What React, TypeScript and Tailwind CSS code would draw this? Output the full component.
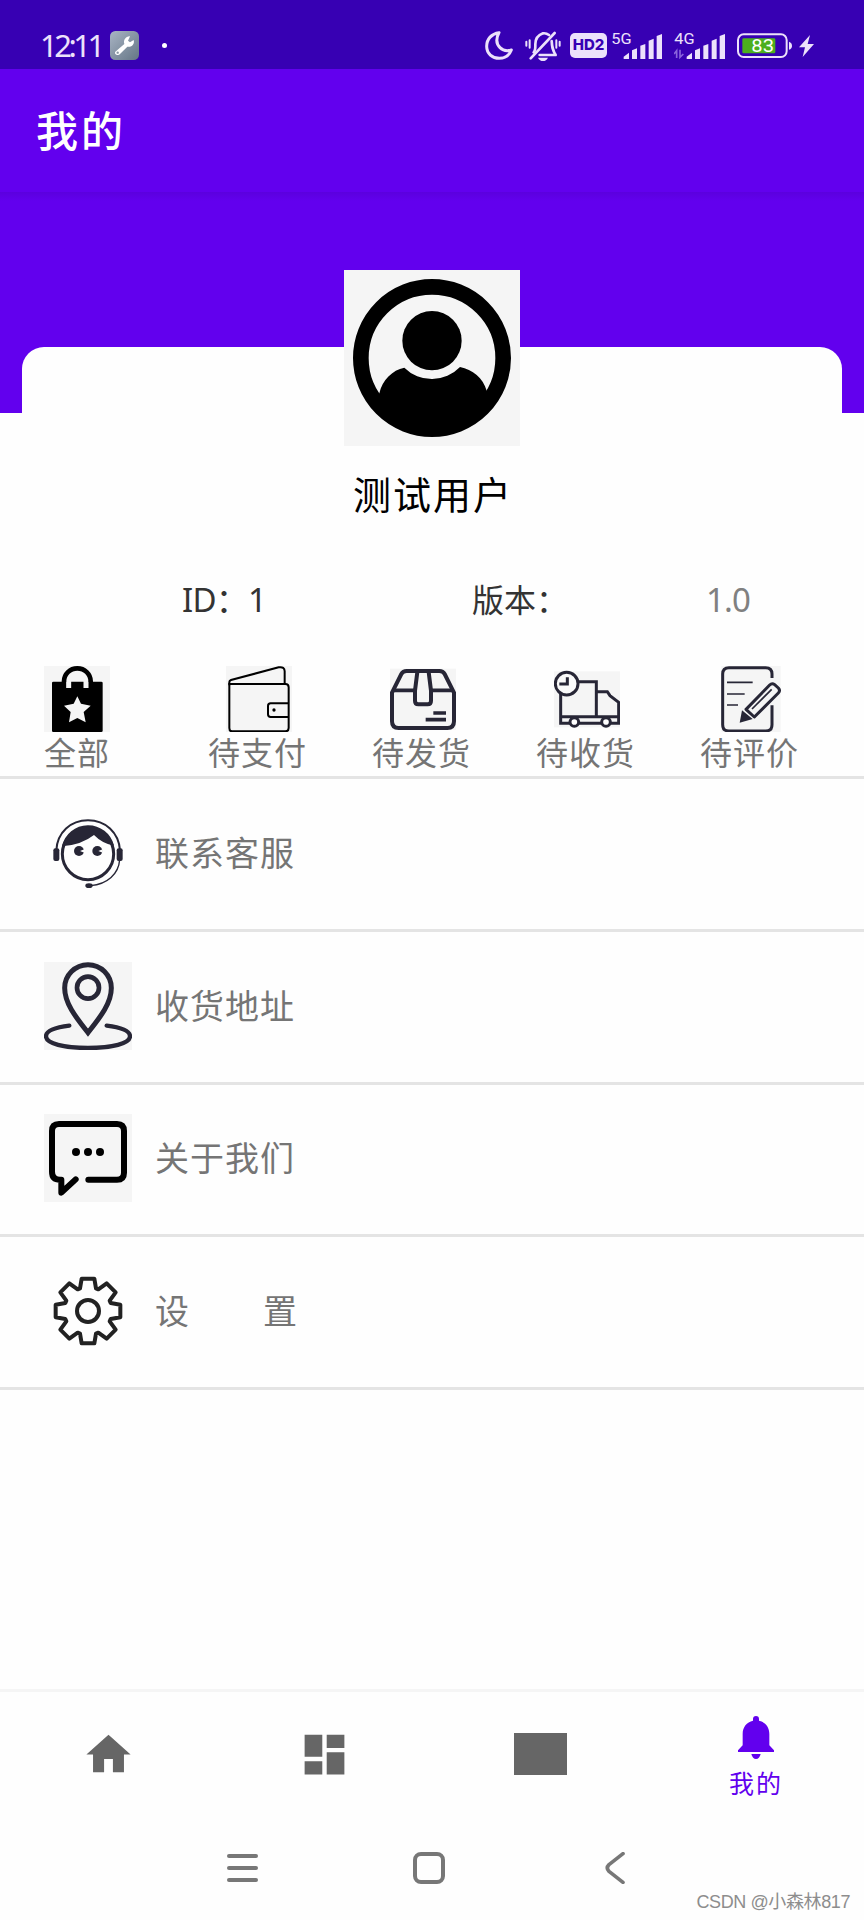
import React, { useState } from 'react';

const INK = '#272636';
const STATUS = '#ece1fb';
const TILE = '#f5f5f5';

const MoonIcon = () => (
  <svg className="w-7 h-[29px]" viewBox="0 0 84 87" fill="none" stroke={STATUS} strokeWidth="9" strokeLinejoin="round">
    <path d="M42 5 C20 8 5 24 5 46 C5 68 22 82 43 82 C60 82 73 73 79 57 C66 61 53 58 45 50 C34 39 33 22 42 5 Z" />
  </svg>
);

const MutedBellIcon = () => (
  <svg className="w-9 h-[30px]" viewBox="0 0 108 90" fill="none" stroke={STATUS} strokeWidth="8" strokeLinecap="round">
    <path d="M26 64 C32 58 31 50 31 40 C31 23 40 12 54 7 C60 6 68 9 72 12" />
    <path d="M80 30 C81 48 82 56 92 72 H44" strokeLinejoin="round" />
    <path d="M17 82 L89 6" />
    <path d="M39 80 H69 Q64 90 54 90 Q44 90 39 80 Z" fill={STATUS} stroke="none" />
    <path d="M4 32 V44 M14 28 V50 M94 28 V50 M104 32 V44" strokeWidth="6" />
  </svg>
);

const SignalIcon = ({ label, arrows }: { label: string; arrows?: boolean }) => (
  <svg className="w-[52px] h-9" viewBox="0 -12 156 108" fill={STATUS}>
    <text x="1" y="37" fontSize="46" fontFamily="Roboto, sans-serif" textLength="61" lengthAdjust="spacingAndGlyphs">
      {label}
    </text>
    <path d="M38 81 V74 L54 62 V81 Z" />
    <path d="M63 81 V55 L78 49 V81 Z" />
    <path d="M88 81 V41 L103 36 V81 Z" />
    <path d="M113 81 V26 L128 20 V81 Z" />
    <path d="M137 81 V12 L153 6 V81 Z" />
    {arrows && (
      <path d="M0 66 L8 56 V78 M18 53 V76 L28 66" fill="none" stroke="#8a63dc" strokeWidth="5" />
    )}
  </svg>
);

const BatteryIcon = () => (
  <svg className="w-[56px] h-[26px]" viewBox="0 0 168 78">
    <rect x="3" y="4" width="146" height="68" rx="17" fill="none" stroke={STATUS} strokeWidth="6" />
    <rect x="16" y="16" width="99" height="45" rx="4" fill="#4caf1e" />
    <path d="M156 26 Q165 29 165 38 Q165 47 156 50 Z" fill={STATUS} />
    <text x="43" y="58" fontSize="54" fontFamily="Roboto, sans-serif" fill="#fff" textLength="68" lengthAdjust="spacingAndGlyphs">
      83
    </text>
  </svg>
);

const BoltIcon = () => (
  <svg className="w-[15px] h-[22px]" viewBox="0 0 45 66" fill={STATUS}>
    <path d="M33 0 L0 37 H18 L11 66 L45 27 H26 Z" />
  </svg>
);

const WrenchIcon = () => (
  <svg className="w-[29px] h-[29px]" viewBox="0 0 87 87">
    <defs>
      <linearGradient id="tool" x1="0" y1="0" x2="1" y2="1">
        <stop offset="0" stopColor="#a9b4c4" />
        <stop offset="1" stopColor="#647585" />
      </linearGradient>
    </defs>
    <rect width="87" height="87" rx="16" fill="url(#tool)" />
    <path d="M16 62 L43 39 C39 27 48 15 60 16 L54 29 L60 34 L71 27 C75 40 64 50 52 47 L30 69 C25 75 11 70 16 62 Z" fill="#fff" />
    <circle cx="23" cy="65" r="3.5" fill="#8593a1" />
  </svg>
);

const Avatar = () => (
  <svg className="w-44 h-44" viewBox="0 0 528 528">
    <rect width="528" height="528" fill={TILE} />
    <circle cx="264" cy="264" r="213.5" fill="none" stroke="#000" strokeWidth="47" />
    <circle cx="264" cy="212" r="89" />
    <path d="M106 370 C115 330 145 300 181 293 A117 117 0 0 0 348 291 C385 298 418 325 428 362 L440 400 A230 230 0 0 1 90 400 Z" />
  </svg>
);

const BagIcon = () => (
  <svg className="w-[66px] h-[66px]" viewBox="0 0 198 198">
    <rect width="198" height="198" fill={TILE} />
    <rect x="24" y="47" width="152" height="151" rx="4" />
    <path d="M74 66 V47 A26 26 0 0 1 126 47 V66" fill="none" stroke={TILE} strokeWidth="15" />
    <path d="M60 48 V46 A40 39 0 0 1 140 46 V48" fill="none" stroke="#000" strokeWidth="14" />
    <path d="M100 91 L111 113 L140 119 L119 138 L125 169 L100 156 L75 169 L80 138 L60 119 L89 113 Z" fill={TILE} />
  </svg>
);

const WalletIcon = () => (
  <svg className="w-[66px] h-[66px]" viewBox="0 0 198 198" fill="none" stroke="#000" strokeWidth="6">
    <rect width="198" height="198" fill={TILE} stroke="none" />
    <path d="M10 58 V48 Q10 44 15 42 L158 4 Q176 1 176 16 V54" />
    <path d="M10 54 H178 Q188 54 188 64 V186 Q188 196 178 196 H18 Q10 196 10 186 Z" />
    <path d="M188 112 H134 Q126 112 126 120 V145 Q126 153 134 153 H188" />
    <circle cx="144" cy="132" r="5" fill="#000" stroke="none" />
  </svg>
);

const PackageIcon = () => (
  <svg className="w-[66px] h-[66px]" viewBox="0 0 198 198" fill="none" stroke={INK} strokeWidth="12">
    <rect y="8" width="198" height="184" fill={TILE} stroke="none" />
    <path d="M6 80 L34 24 Q39 15 50 15 H148 Q159 15 164 24 L192 80 V166 Q192 186 172 186 H26 Q6 186 6 166 Z" />
    <path d="M10 73 H76 M122 73 H188" strokeWidth="11" />
    <path d="M82 18 L75 74 V104 Q75 115 85 115 H113 Q123 115 123 104 V74 L116 18" />
    <path d="M130 141 H168 M107 161 H168" strokeWidth="11" />
  </svg>
);

const TruckIcon = () => (
  <svg className="w-[66px] h-[66px]" viewBox="0 0 198 198" fill="none" stroke={INK} strokeWidth="9">
    <rect y="16" width="198" height="168" fill={TILE} stroke="none" />
    <path d="M72 47 H127 V150 M20 84 V172 H194 V109 L168 89 L160 77 H128 M20 152 H194" />
    <circle cx="38" cy="53" r="34" fill="#fafafa" />
    <path d="M40 34 V54 H16" />
    <circle cx="61" cy="168" r="13" fill="#fff" />
    <circle cx="156" cy="168" r="13" fill="#fff" />
  </svg>
);

const ReviewIcon = () => (
  <svg className="w-[66px] h-[66px]" viewBox="0 0 198 198" fill="none" stroke={INK} strokeWidth="9">
    <rect x="10" width="178" height="198" fill={TILE} stroke="none" />
    <path d="M162 36 V24 Q162 5 143 5 H33 Q14 5 14 24 V176 Q14 195 33 195 H143 Q162 195 162 176 V118" />
    <path d="M27 49 H104 M27 84 H80 M27 117 H60" strokeWidth="5" />
    <path d="M84 130 L155 57 Q162 50 170 56 L181 66 Q188 74 181 81 L109 153 Z" strokeLinejoin="round" />
    <path d="M102 129 L161 70" strokeWidth="5" />
    <path d="M65 170 L72 133 L104 159 Z" fill={INK} stroke="none" />
  </svg>
);

const SupportIcon = () => (
  <svg className="w-[88px] h-[88px]" viewBox="0 0 264 264" fill="none" stroke={INK}>
    <path d="M37 124 C40 70 80 34 132 34 C184 34 224 70 228 124" strokeWidth="6" />
    <circle cx="132" cy="135" r="77" strokeWidth="9" />
    <path d="M54 112 Q112 108 150 78 Q175 104 210 110 A80 80 0 0 0 54 112 Z" fill={INK} stroke="none" />
    <rect x="28" y="118" width="18" height="38" rx="6" fill={INK} stroke="none" />
    <rect x="218" y="118" width="18" height="38" rx="6" fill={INK} stroke="none" />
    <circle cx="105" cy="126" r="15" fill={INK} stroke="none" />
    <circle cx="160" cy="126" r="15" fill={INK} stroke="none" />
    <path d="M108 126 L121 121 V131 Z M163 126 L176 121 V131 Z" fill="#fff" stroke="none" />
    <path d="M227 152 C224 195 190 226 140 230" strokeWidth="4" />
    <ellipse cx="135" cy="230" rx="11" ry="7" fill={INK} stroke="none" />
  </svg>
);

const AddressIcon = () => (
  <svg className="w-[88px] h-[88px]" viewBox="0 0 264 264" fill="none" stroke={INK} strokeWidth="15">
    <rect width="264" height="264" fill={TILE} stroke="none" />
    <path d="M132 212 C95 165 62 124 62 78 A70 70 0 0 1 202 78 C202 124 169 165 132 212 Z" />
    <circle cx="132" cy="77" r="33" strokeWidth="14" />
    <path d="M76 191 C35 196 6 206 6 223 C6 245 60 258 132 258 S258 245 258 223 C258 206 229 196 188 191" strokeWidth="13" strokeLinecap="round" />
  </svg>
);

const ChatIcon = () => (
  <svg className="w-[88px] h-[88px]" viewBox="0 0 264 264">
    <rect width="264" height="264" fill={TILE} />
    <path
      d="M133 197 H219 Q240 197 240 176 V51 Q240 30 219 30 H45 Q24 30 24 51 V173 Q24 197 48 197 H52 V236 L95 196"
      fill="none"
      stroke="#000"
      strokeWidth="18"
      strokeLinecap="round"
      strokeLinejoin="round"
    />
    <circle cx="96" cy="114" r="12" />
    <circle cx="132" cy="114" r="12" />
    <circle cx="168" cy="114" r="12" />
  </svg>
);

const GearIcon = () => (
  <svg className="w-[88px] h-[88px]" viewBox="-132 -132 264 264" fill="none" stroke="#222" strokeWidth="12" strokeLinejoin="round">
    <path d="M-19 -97 H19 L24 -68 L31 -65 L56 -83 L83 -56 L65 -31 L68 -24 L97 -19 V19 L68 24 L65 31 L83 56 L56 83 L31 65 L24 68 L19 97 H-19 L-24 68 L-31 65 L-56 83 L-83 56 L-65 31 L-68 24 L-97 19 V-19 L-68 -24 L-65 -31 L-83 -56 L-56 -83 L-31 -65 L-24 -68 Z" />
    <circle r="33" />
  </svg>
);

const orders = [
  { label: '待支付', icon: <WalletIcon /> },
  { label: '待发货', icon: <PackageIcon /> },
  { label: '待收货', icon: <TruckIcon /> },
  { label: '待评价', icon: <ReviewIcon /> }
];

const menu = [
  { label: '联系客服', icon: <SupportIcon /> },
  { label: '收货地址', icon: <AddressIcon /> },
  { label: '关于我们', icon: <ChatIcon /> },
  { label: '设置', icon: <GearIcon />, spread: true }
];

const tabs = [
  {
    key: 'home',
    icon: (
      <svg className="w-[53px] h-[53px]" viewBox="0 0 24 24" fill="currentColor">
        <path d="M10 20v-6h4v6h5v-8h3L12 3 2 12h3v8z" />
      </svg>
    )
  },
  {
    key: 'dashboard',
    icon: (
      <svg className="w-[53px] h-[53px]" viewBox="0 0 24 24" fill="currentColor">
        <path d="M3 13h8V3H3v10zm0 8h8v-6H3v6zm10 0h8V11h-8v10zm0-18v6h8V3h-8z" />
      </svg>
    )
  },
  { key: 'cart', icon: <div className="w-[53px] h-[42px] bg-current" /> },
  {
    key: 'mine',
    label: '我的',
    icon: (
      <svg className="w-9 h-[43px]" viewBox="0 0 108 129" fill="currentColor">
        <path d="M45 14 V9 A9 9 0 0 1 63 9 V14 C82 18 94 33 94 54 V88 L108 103 V108 H0 V103 L14 88 V54 C14 33 26 18 45 14 Z" />
        <path d="M40 114 H68 Q64 129 54 129 Q44 129 40 114 Z" />
      </svg>
    )
  }
];

const App: React.FC = () => {
  const [activeTab, setActiveTab] = useState('mine');

  return (
    <div className="relative flex flex-col w-[864px] h-[1920px] overflow-hidden bg-[#fefefe] font-['Noto_Sans','Noto_Sans_CJK_SC',sans-serif]">
      {/* Status bar */}
      <div className="flex items-center justify-between h-[69px] pt-[22px] pl-[40px] pr-[50px] bg-[#3700b3] text-[#ece1fb]">
        <div className="flex items-center">
          <span className="w-[70px] text-[31px] leading-none tracking-[-3.5px]">12:11</span>
          <WrenchIcon />
          <span className="w-[5px] h-[5px] ml-[23px] rounded-full bg-white" />
        </div>
        <div className="flex items-center">
          <MoonIcon />
          <div className="ml-3"><MutedBellIcon /></div>
          <div className="flex items-center justify-center w-[37px] h-[25px] ml-[9px] rounded-[5px] bg-[#ece1fb] text-[#3700b3] text-[15px] font-extrabold font-['Inter',sans-serif]">
            HD2
          </div>
          <div className="ml-1"><SignalIcon label="5G" /></div>
          <div className="ml-[11px]"><SignalIcon label="4G" arrows /></div>
          <div className="ml-[11px]"><BatteryIcon /></div>
          <div className="ml-1.5"><BoltIcon /></div>
        </div>
      </div>

      {/* App bar */}
      <div className="flex items-center h-[123px] pl-9 bg-[#6200ee] text-white">
        <h1 className="text-[42px] leading-none font-medium tracking-[3px]">我的</h1>
      </div>

      {/* Profile header */}
      <div className="flex items-end h-[221px] px-[22px] bg-[#6200ee] bg-linear-to-b from-[#5b00de] to-[#6200ee] to-4%">
        <div className="w-full h-[66px] rounded-t-[22px] bg-[#fefefe]" />
      </div>
      <div className="relative flex flex-col items-center -mt-[143px]">
        <Avatar />
        <p className="h-[50px] mt-[23px] pl-0.5 text-[38px] leading-[50px] tracking-[2px] text-black">测试用户</p>
      </div>
      <div className="flex items-center h-10 mt-[61px] pl-[182px] text-[33px] text-[#333]">
        <span className="w-[290px] tracking-[-0.8px]">ID：1</span>
        <span className="w-[234px] text-[32px]">版本：</span>
        <span className="text-[#808080] tracking-[-0.8px]">1.0</span>
      </div>

      {/* Orders */}
      <div className="flex mt-[46px] pl-11 text-[#757575] text-[32px] tracking-[1px]">
        <div className="flex flex-col w-[164px]">
          <BagIcon />
          <span className="h-11 leading-[42px]">全部</span>
        </div>
        {orders.map((order) => (
          <div key={order.label} className="flex flex-col w-[164px]">
            <div className="ml-[18px]">{order.icon}</div>
            <span className="h-11 leading-[42px]">{order.label}</span>
          </div>
        ))}
      </div>

      {/* Menu */}
      <div className="border-t-[3px] border-[#e4e4e4]">
        {menu.map((item) => (
          <div key={item.label} className="flex items-center h-[152.75px] pl-11 pb-[2px] border-b-[3px] border-[#e4e4e4]">
            {item.icon}
            <span className={`ml-[23px] text-[34px] leading-none text-[#757575] ${item.spread ? 'tracking-[74px]' : 'tracking-[1px]'}`}>
              {item.label}
            </span>
          </div>
        ))}
      </div>

      {/* Bottom navigation */}
      <div className="grid grid-cols-4 h-[129px] mt-auto border-t-[3px] border-[#f5f5f5]">
        {tabs.map((tab) => (
          <button
            key={tab.key}
            onClick={() => setActiveTab(tab.key)}
            className={`flex flex-col items-center justify-center ${tab.label ? 'pt-1.5' : 'pb-0.5'} ${activeTab === tab.key ? 'text-[#6200ee]' : 'text-[#666]'}`}
          >
            {tab.icon}
            {tab.label && <span className="mt-[7px] text-[25px] leading-[34px] tracking-[2px]">{tab.label}</span>}
          </button>
        ))}
      </div>

      {/* System navigation */}
      <div className="flex items-center h-[102px] pl-[227px] pb-0.5">
        <div className="flex flex-col gap-2 w-[186px]">
          <span className="w-[31px] h-1 rounded-full bg-[#777]" />
          <span className="w-[31px] h-1 rounded-full bg-[#777]" />
          <span className="w-[31px] h-1 rounded-full bg-[#777]" />
        </div>
        <div className="w-8 h-8 border-4 border-[#777] rounded-[8px]" />
        <svg className="w-5 h-8 ml-[160px]" viewBox="0 0 60 96" fill="none" stroke="#777" strokeWidth="11" strokeLinecap="round" strokeLinejoin="round">
          <path d="M54 5 L12 38 Q2 48 12 58 L54 91" />
        </svg>
      </div>

      <span className="absolute right-[14px] bottom-[6px] text-[18px] leading-6 tracking-[-0.4px] text-[#8d8d8d] font-['Liberation_Sans','Noto_Sans_CJK_SC',sans-serif]">
        CSDN @小森林817
      </span>
    </div>
  );
};

export default App;
